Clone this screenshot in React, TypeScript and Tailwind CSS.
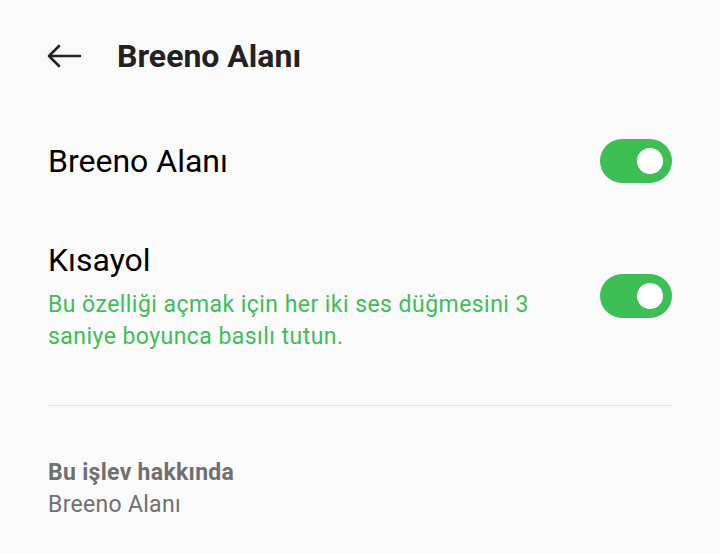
function Toggle() {
  return (
    <div className="relative h-[44px] w-[72px] shrink-0 rounded-full bg-[#3dbf56]">
      <div className="absolute right-[9px] top-[9px] h-[26px] w-[26px] rounded-full bg-white" />
    </div>
  );
}

export default function App() {
  return (
    <div className="h-[554px] w-[720px] overflow-hidden bg-[#fafafa] font-['Roboto',sans-serif]">
      <div className="flex h-[112px] items-center pl-[46px]">
        <svg width="36" height="24" viewBox="0 0 36 24" fill="none" stroke="#222" strokeWidth="2.6" strokeLinecap="round" strokeLinejoin="round">
          <path d="M34 12H3M13 2L3 12l10 10" />
        </svg>
        <h1 className="ml-[35px] text-[32px] font-bold text-[#222]">Breeno Alanı</h1>
      </div>
      <div className="px-[48px]">
        <div className="flex h-[98px] items-center justify-between">
          <span className="text-[32px] text-black">Breeno Alanı</span>
          <Toggle />
        </div>
        <div className="flex items-center justify-between pb-[52px] pt-[28px]">
          <div>
            <div className="text-[32px] leading-[44px] text-black">Kısayol</div>
            <div className="mt-[7px] w-[510px] text-[23px] leading-[32px] tracking-[0.45px] text-[#3fbd58]">
              Bu özelliği açmak için her iki ses düğmesini 3 saniye boyunca basılı tutun.
            </div>
          </div>
          <Toggle />
        </div>
        <div className="h-px bg-[#e3e3e3]" />
        <div className="pt-[51px] text-[23px] leading-[32px] tracking-[0.3px] text-[#707070]">
          <div className="font-bold">Bu işlev hakkında</div>
          <div>Breeno Alanı</div>
        </div>
      </div>
    </div>
  );
}
